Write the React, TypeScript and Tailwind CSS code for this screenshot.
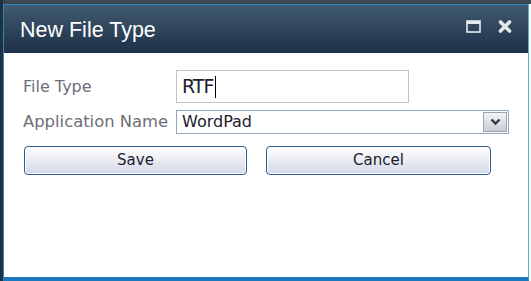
const App = () => {
  return (
    <div className="w-[531px] h-[281px] bg-[#22303d] flex flex-col overflow-hidden">
      <div className="h-[4px] bg-[#3b4854] ml-[3px]"></div>
      <div className="flex-1 flex ml-[3px] bg-white">
        <div className="w-[526px] flex flex-col border-l border-t border-r border-[#2b86c8] border-r-[#5aaee6] border-b-[4px] border-b-[#1a78bd]">
          <div className="h-[48px] bg-gradient-to-b from-[#415a6f] to-[#1d3148] flex items-center justify-between pl-[16px] pr-[16px]">
            <span className="text-white text-[21.5px] font-['Liberation_Sans',sans-serif] pt-[2px]">New File Type</span>
            <div className="flex items-center gap-[17px] mt-[-6px]">
              <svg width="15" height="13" viewBox="0 0 15 13">
                <rect x="1" y="1" width="13" height="11" fill="none" stroke="#e8ecef" strokeWidth="1.6" />
                <rect x="1" y="1" width="13" height="3" fill="#e8ecef" />
              </svg>
              <svg width="14" height="13" viewBox="0 0 14 13">
                <path d="M2.5 2 L11.5 11 M11.5 2 L2.5 11" stroke="#e4e8ea" strokeWidth="3.6" strokeLinecap="round" />
              </svg>
            </div>
          </div>
          <div className="flex-1 bg-white pt-[17px] pl-[19px] font-['DejaVu_Sans',sans-serif]">
            <div className="flex items-center h-[33px]">
              <span className="w-[153px] text-[16px] text-[#6e6e78]">File Type</span>
              <div className="w-[233px] h-[33px] border border-[#c4c4c4] flex items-center pl-[5px]">
                <span className="text-[19px] text-[#202030] tracking-[-1px]">RTF</span>
                <span className="w-px h-[22px] bg-black ml-[2px]"></span>
              </div>
            </div>
            <div className="flex items-center h-[24px] mt-[7px]">
              <span className="w-[153px] text-[16.4px] text-[#6e6e78] whitespace-nowrap">Application Name</span>
              <div className="w-[333px] h-[24px] border border-[#92a8c0] flex items-center justify-between pl-[5px] pr-[1px]">
                <span className="text-[16px] text-[#202030]">WordPad</span>
                <div className="w-[24px] h-[20px] border border-[#9aa4b0] bg-gradient-to-b from-[#f2f4f6] to-[#c8ced6] flex items-center justify-center">
                  <svg width="11" height="8" viewBox="0 0 11 8">
                    <path d="M1.5 1.5 L5.5 5.5 L9.5 1.5" fill="none" stroke="#333a44" strokeWidth="2.4" />
                  </svg>
                </div>
              </div>
            </div>
            <div className="flex mt-[12px] gap-[19px] pl-[1px]">
              <button className="w-[223px] h-[29px] rounded-[4px] border border-[#2d5c94] bg-gradient-to-b from-[#ffffff] to-[#d4d8e6] text-[15px] text-[#202030] shadow-[inset_0_0_0_1px_#ffffff]">Save</button>
              <button className="w-[225px] h-[29px] rounded-[4px] border border-[#2d5c94] bg-gradient-to-b from-[#ffffff] to-[#d4d8e6] text-[15px] text-[#202030] shadow-[inset_0_0_0_1px_#ffffff]">Cancel</button>
            </div>
          </div>
        </div>
      </div>
    </div>
  );
};

export default App;
